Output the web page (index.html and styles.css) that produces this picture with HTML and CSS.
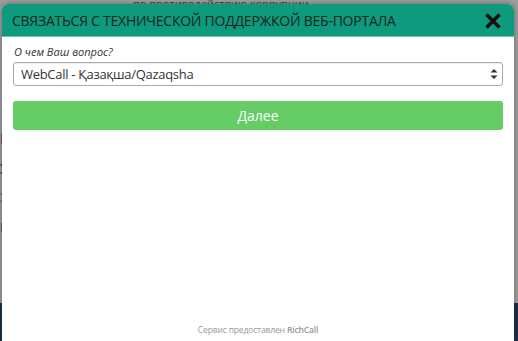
FILE: index.html
```html
<!DOCTYPE html>
<html lang="ru">
<head>
  <meta charset="UTF-8">
  <meta name="viewport" content="width=device-width, initial-scale=1.0">
  <title>Связаться с технической поддержкой</title>
  <link rel="stylesheet" href="styles.css">
</head>
<body>
  <div class="page">
    <div class="page-top">по противодействию коррупции</div>
    <div class="page-main">
      <p class="news-title">Новости</p>
      <p class="news-title">Уведомление</p>
      <p class="news-text">Жалобы и обращения</p>
      <p class="news-text">Госуслуги</p>
    </div>
    <div class="page-footer"></div>
  </div>

  <div class="modal">
    <div class="modal-header">
      <h2>Связаться с технической поддержкой веб-портала</h2>
      <button class="close" aria-label="Закрыть">
        <svg width="18" height="18" viewBox="0 0 18 18">
          <path d="M2.5 2.5 L15.5 15.5 M15.5 2.5 L2.5 15.5" stroke="#111" stroke-width="3.6"/>
        </svg>
      </button>
    </div>
    <div class="modal-body">
      <label class="field-label" for="topic">О чем Ваш вопрос?</label>
      <div class="select-wrap">
        <select id="topic">
          <option>WebCall - Қазақша/Qazaqsha</option>
          <option>WebCall - Русский</option>
        </select>
        <span class="arrows">
          <svg width="8" height="12" viewBox="0 0 8 12">
            <path d="M0.5 4.5 L4 1 L7.5 4.5 Z M0.5 7.5 L4 11 L7.5 7.5 Z" fill="#333"/>
          </svg>
        </span>
      </div>
      <button class="next">Далее</button>
    </div>
    <div class="modal-footer">Сервис предоставлен <b>RichCall</b></div>
  </div>
</body>
</html>
```

FILE: styles.css
```css
html, body {
  margin: 0;
  height: 100%;
}
body {
  font-family: "Open Sans", Arial, sans-serif;
  background-color: #9f9f9f;
  overflow: hidden;
}
.page {
  display: flex;
  flex-direction: column;
  height: 100%;
}
.page-top {
  height: 7px;
  margin-bottom: -3px;
  padding-left: 133px;
  font-size: 11px;
  line-height: 7px;
  color: #444;
  flex-shrink: 0;
}
.page-main {
  flex: 1;
  padding-top: 126px;
}
.page-main p {
  margin: 0 0 14px 0;
  line-height: 16px;
}
.news-title {
  font-size: 15px;
  font-weight: bold;
  color: #1f3a66;
}
.news-text {
  font-size: 12px;
  color: #555;
}
.page-footer {
  height: 38px;
  background-color: #1d2f4f;
  flex-shrink: 0;
}
.modal {
  position: absolute;
  left: 2px;
  right: 4px;
  top: 4px;
  bottom: 0;
  background-color: #fff;
  border-radius: 6px 6px 0 0;
  box-shadow: 0 0 6px rgba(0, 0, 0, 0.35);
  display: flex;
  flex-direction: column;
}
.modal-header {
  display: flex;
  align-items: center;
  justify-content: space-between;
  height: 32px;
  padding: 0 12px 0 10px;
  background-color: #0e9a7d;
  border-bottom: 1px solid #6fc4b0;
  border-radius: 6px 6px 0 0;
}
.modal-header h2 {
  margin: 0;
  font-size: 14px;
  font-weight: normal;
  letter-spacing: -0.25px;
  text-transform: uppercase;
  color: #142520;
}
.close {
  border: none;
  background: none;
  padding: 0;
  width: 18px;
  height: 18px;
  margin-top: 1px;
  cursor: pointer;
}
.close svg {
  display: block;
}
.modal-body {
  padding: 7px 11px 0 11px;
  flex: 1;
}
.field-label {
  display: block;
  font-size: 11px;
  font-style: italic;
  color: #333;
  margin: 0 0 3px 1px;
}
.select-wrap {
  position: relative;
}
.select-wrap select {
  width: 100%;
  height: 24px;
  padding: 0 7px;
  font-family: "Open Sans", Arial, sans-serif;
  font-size: 13px;
  letter-spacing: -0.3px;
  color: #333;
  background-color: #fff;
  border: 1px solid #aaa;
  border-radius: 3px;
  box-shadow: inset 0 1px 1px rgba(0, 0, 0, 0.08);
  appearance: none;
  -webkit-appearance: none;
}
.arrows {
  position: absolute;
  right: 5px;
  top: 6px;
  pointer-events: none;
}
.arrows svg {
  display: block;
}
.next {
  display: block;
  width: 100%;
  height: 29px;
  margin-top: 15px;
  font-family: "Open Sans", Arial, sans-serif;
  font-size: 14px;
  color: #fff;
  background-color: #66cc66;
  border: none;
  border-radius: 3px;
  cursor: pointer;
}
.modal-footer {
  text-align: center;
  font-size: 8.6px;
  letter-spacing: -0.2px;
  color: #999;
  padding-bottom: 5px;
}
.modal-footer b {
  font-weight: 600;
}
```
